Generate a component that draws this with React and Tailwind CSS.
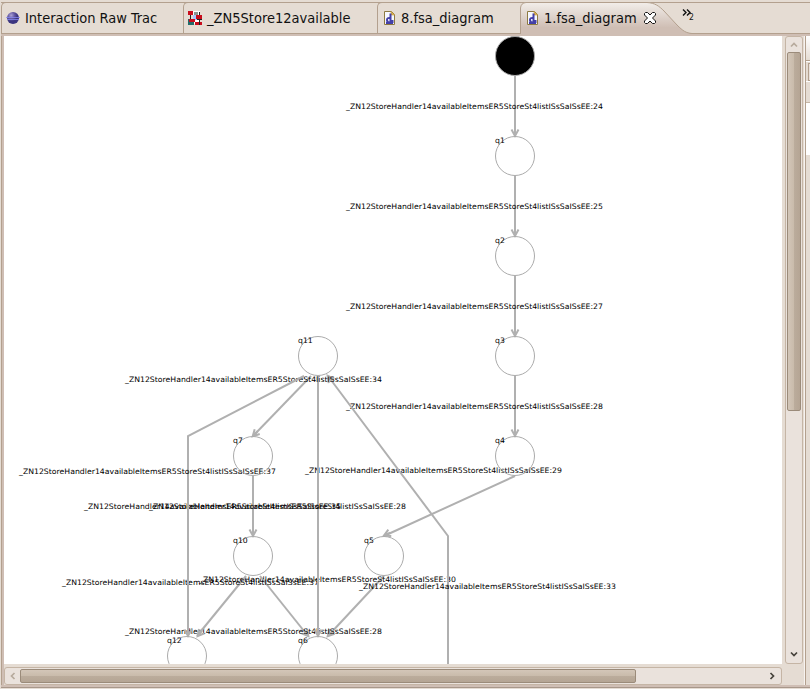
import React from "react";

const SYMBOL = "_ZN12StoreHandler14availableItemsER5StoreSt4listISsSaISsEE:";

const NODES = [
  { id: "q0", x: 515, y: 56, filled: true },
  { id: "q1", x: 515, y: 156 },
  { id: "q2", x: 515, y: 256 },
  { id: "q3", x: 515, y: 356 },
  { id: "q4", x: 515, y: 456 },
  { id: "q11", x: 318, y: 356 },
  { id: "q7", x: 253, y: 456 },
  { id: "q10", x: 253, y: 556 },
  { id: "q5", x: 384, y: 556 },
  { id: "q12", x: 187, y: 656 },
  { id: "q6", x: 318, y: 656 },
];

// Each edge is a polyline; tip is the arrow head position and its angle in degrees.
// Edges are painted in order, so a later line may cross an earlier label.
const EDGES = [
  { points: "515,76 515,136", tip: [515, 137, 90], label: [346, 109, "24"] },
  { points: "515,176 515,236", tip: [515, 237, 90], label: [346, 209, "25"] },
  { points: "515,276 515,336", tip: [515, 337, 90], label: [346, 309, "27"] },
  { points: "515,376 515,436", tip: [515, 437, 90], label: [346, 409, "28"] },
  { points: "515,476 384,536", tip: [383, 536, 155], label: [305, 473, "29"] },
  { points: "384,576 328,636", tip: [327, 637, 133], label: [199, 582, "30"] },
  { points: "260,576 308,636", tip: [309, 637, 51], label: [125, 634, "28"] },
  { points: "246,576 197,636", tip: [197, 637, 129], label: [62, 585, "37"] },
  { points: "318,376 318,636", tip: [318, 637, 90], label: [149, 509, "28"] },
  { points: "448,664 448,536 328,376", tip: [327, 375, 233], label: [359, 589, "33"] },
  { points: "311,376 253,436", tip: [252, 437, 134], label: [125, 382, "34"] },
  { points: "253,476 253,536", tip: [253, 537, 90], label: [84, 509, "35"] },
  { points: "304,376 188,436 188,636", tip: [188, 637, 90], label: [19, 474, "37"] },
];

function Diagram() {
  return (
    <svg
      width="778"
      height="628"
      viewBox="4 36 778 628"
      className="block bg-white font-['DejaVu_Sans',sans-serif] [font-stretch:normal]"
    >
      {EDGES.map((e, i) => (
        <g key={i}>
          <g fill="none" stroke="#b0b0b0" strokeWidth="2">
            <polyline points={e.points} />
            <path
              d="M-7.5,-3.5 L-1,0 L-7.5,3.5 M-8,0 H-1"
              strokeWidth="2"
              transform={`translate(${e.tip[0]} ${e.tip[1]}) rotate(${e.tip[2]})`}
            />
          </g>
          <text x={e.label[0]} y={e.label[1]} fontSize="7.5" textLength="257" lengthAdjust="spacingAndGlyphs" fill="#000">
            {SYMBOL + e.label[2]}
          </text>
        </g>
      ))}
      {NODES.map((n) => (
        <g key={n.id}>
          {!n.filled && <circle cx={n.x} cy={n.y} r="19.5" fill="none" stroke="#ababab" />}
          <text
            x={n.x - 20}
            y={n.y - 13}
            fontSize="7.5"
            fill="#000"
            textLength={n.id.length * 4.9}
            lengthAdjust="spacingAndGlyphs"
          >
            {n.filled ? "" : n.id}
          </text>
          {n.filled && <circle cx={n.x} cy={n.y} r="19.5" fill="#000" stroke="#ababab" />}
        </g>
      ))}
    </svg>
  );
}

function SphereIcon() {
  return (
    <svg width="14" height="14" viewBox="0 0 14 14" className="shrink-0">
      <defs>
        <radialGradient id="sphere" cx="35%" cy="28%">
          <stop offset="0" stopColor="#aaa2d5" />
          <stop offset=".55" stopColor="#655aa5" />
          <stop offset="1" stopColor="#3c3580" />
        </radialGradient>
      </defs>
      <circle cx="7" cy="7" r="6" fill="url(#sphere)" />
      <path d="M0 6.500H14M1 8.500H13" stroke="#8588ee" strokeWidth=".8" />
    </svg>
  );
}

function BlocksIcon() {
  return (
    <svg width="15" height="15" viewBox="0 0 15 15" shapeRendering="crispEdges" className="shrink-0">
      <rect x="5" y="0" width="7" height="13" fill="#fff" />
      <path d="M2.500 4v5M11.500 1v13M5 8.500h9" stroke="#222" />
      <rect x="5" y="4" width="4" height="5" fill="#a4c5ff" />
      <rect x="6" y="1" width="4" height="3" fill="#8b9690" />
      <rect x="0" y="8" width="6" height="6" fill="#226b69" />
      <path fill="#c90c1c" d="M0 0h5v4H0zM8 4h6v4H8zM1 8h6v3H1zM7 11h4v3H7zM12 11h2v3h-2z" />
    </svg>
  );
}

function DiagramFileIcon() {
  return (
    <svg width="11" height="14" viewBox="0 0 11 14" className="shrink-0">
      <path d="M.5.5H7.5L10.5 3.5V13.5H.5Z" fill="#f6f8ff" stroke="#8d7a42" />
      <path d="M7 0.5V4H10.5Z" fill="#e5b54a" stroke="#c39b3e" strokeWidth=".6" />
      <path d="M6.500 2.500V11.500M6 7Q3 6.500 3 9T6 11.500M8.500 9v3M2 12H9" fill="none" stroke="#4440a8" strokeWidth="2" />
    </svg>
  );
}

function Tab({ icon, label, className }) {
  return (
    <div className={`flex h-[31px] shrink-0 items-center rounded-tl-[5px] border-l border-t border-[#b3a08e] ${className}`}>
      {icon}
      <span className="whitespace-pre leading-[18px]">{label}</span>
    </div>
  );
}

function ActiveTab() {
  return (
    <div className="relative flex h-[34px] w-[172px] shrink-0 items-center pl-[7px] pb-[2px]">
      <svg width="172" height="34" viewBox="0 0 172 34" className="absolute left-0 top-0">
        <defs>
          <linearGradient id="activeTab" x1="0" y1="0" x2="0" y2="1">
            <stop offset="0" stopColor="#f2eeea" />
            <stop offset=".75" stopColor="#cfbeb4" />
            <stop offset="1" stopColor="#cfbeb4" />
          </linearGradient>
        </defs>
        <path
          d="M.5 34V6Q1 1 6 .5H127C135 1 139 4 144 9L157 23C163 29 166 31 172 31.5V34Z"
          fill="url(#activeTab)"
        />
        <path d="M.5 32V6Q1 1 6 .5H127C135 1 139 4 144 9L157 23C163 29 166 31 172 31.5" fill="none" stroke="#b3a08e" />
      </svg>
      <div className="relative flex items-center">
        <DiagramFileIcon />
        <span className="ml-[6px] w-[93px] whitespace-pre leading-[18px]">1.fsa_diagram</span>
        <svg width="12" height="12" viewBox="0 0 12 12" className="ml-[7px]">
          <path
            d="M1.500 .5H3.500L6 3L8.500 .5H10.500L11.500 1.500V3L8.500 6L11.500 9V10.500L10.500 11.500H8.500L6 9L3.500 11.500H1.500L.5 10.500V9L3.500 6L.5 3V1.500Z"
            fill="#fff"
            stroke="#111"
          />
        </svg>
      </div>
    </div>
  );
}

function Chevron({ d, color }) {
  return (
    <svg width="8" height="8" viewBox="0 0 8 8" className="shrink-0">
      <path d={d} fill="none" stroke={color} strokeWidth="1.7" />
    </svg>
  );
}

function VerticalScrollbar() {
  return (
    <div className="ml-[3px] flex h-[628px] w-[18px] flex-col items-center rounded-[3px] border border-[#c5b5a5] bg-[#eae2dc]">
      <div className="flex h-[15px] items-center">
        <Chevron d="M1 5.500L4 2.500L7 5.500" color="#b7aa9c" />
      </div>
      <div className="h-[359px] w-[14px] rounded-[2px] border border-[#9b8b7a] bg-[linear-gradient(90deg,#d3c6b8_0%,#c9bbab_49%,#bbac9c_51%,#b5a594_100%)]" />
      <div className="mt-auto flex h-[18px] items-center">
        <Chevron d="M1 2.500L4 5.500L7 2.500" color="#46423b" />
      </div>
    </div>
  );
}

function HorizontalScrollbar() {
  return (
    <div className="mt-[3px] flex h-[18px] w-[778px] items-center rounded-[3px] border border-[#c5b5a5] bg-[#eae2dc]">
      <div className="flex w-[15px] justify-center">
        <Chevron d="M5.500 1L2.500 4L5.500 7" color="#b7aa9c" />
      </div>
      <div className="h-[14px] w-[616px] rounded-[2px] border border-[#9b8b7a] bg-[linear-gradient(180deg,#d3c6b8_0%,#c9bbab_49%,#bbac9c_51%,#b5a594_100%)]" />
      <div className="ml-auto flex w-[18px] justify-center">
        <Chevron d="M2.500 1L5.500 4L2.500 7" color="#46423b" />
      </div>
    </div>
  );
}

function NeighbourPane() {
  return (
    <div className="ml-[2px] flex h-[649px] w-[5px] flex-col border-l border-[#b3a08e] bg-[#e5dcd3] shadow-[-1px_0_0_#f7f3f0]">
      <div className="h-[24px] bg-gradient-to-b from-white to-[#e5dcd3]" />
      <div className="h-px bg-[#b3a08e]" />
      <div className="h-px bg-white" />
      <div className="ml-[2px] mt-px h-[18px] border-y border-l border-[#b3a08e] bg-[#eae2dc]" />
      <div className="h-px bg-white" />
      <div className="mt-[20px] h-px bg-[#c5b5a5]" />
      <div className="h-[52px] bg-white" />
    </div>
  );
}

export default function App() {
  return (
    <div className="flex h-[689px] w-[810px] flex-col overflow-hidden bg-[#e5dcd3] font-['DejaVu_Sans_Condensed','DejaVu_Sans',sans-serif] text-[14.500px] text-[#111] [font-stretch:condensed]">
      <div className="ml-px mt-[2px] flex h-[34px] bg-[linear-gradient(180deg,#b3a08e_0,#b3a08e_1px,#e5dcd3_1px,#e5dcd3_31px,#b3a08e_31px,#b3a08e_32px,#cfbeb4_32px)]">
        <Tab className="w-[182px] gap-[5px] pl-[4px] tracking-[-0.030px]" icon={<SphereIcon />} label="Interaction Raw Trac" />
        <Tab className="w-[194px] gap-[4px] pl-[4px]" icon={<BlocksIcon />} label="_ZN5Store12available" />
        <Tab className="w-[143px] gap-[6px] pl-[6px]" icon={<DiagramFileIcon />} label="8.fsa_diagram" />
        <ActiveTab />
        <div className="-ml-[10px] flex pt-[7px]">
          <svg width="9" height="7" viewBox="0 0 9 7" className="shrink-0">
            <path d="M1 .5L4 3.500L1 6.500M5 .5L8 3.500L5 6.500" fill="none" stroke="#111" strokeWidth="1.400" />
          </svg>
          <span className="-ml-[2px] mt-[3px] text-[8.500px] leading-[10px]">2</span>
        </div>
      </div>
      <div className="ml-px flex h-[649px] border-l border-[#b3a08e]">
        <div className="h-[649px] w-[2px] shrink-0 bg-[#cfbeb4]" />
        <div className="flex w-[778px] shrink-0 flex-col">
          <Diagram />
          <HorizontalScrollbar />
        </div>
        <VerticalScrollbar />
        <NeighbourPane />
      </div>
      <div className="ml-px h-[2px] bg-[#cfbeb4]" />
      <div className="ml-px h-px bg-[#a8978a]" />
    </div>
  );
}
